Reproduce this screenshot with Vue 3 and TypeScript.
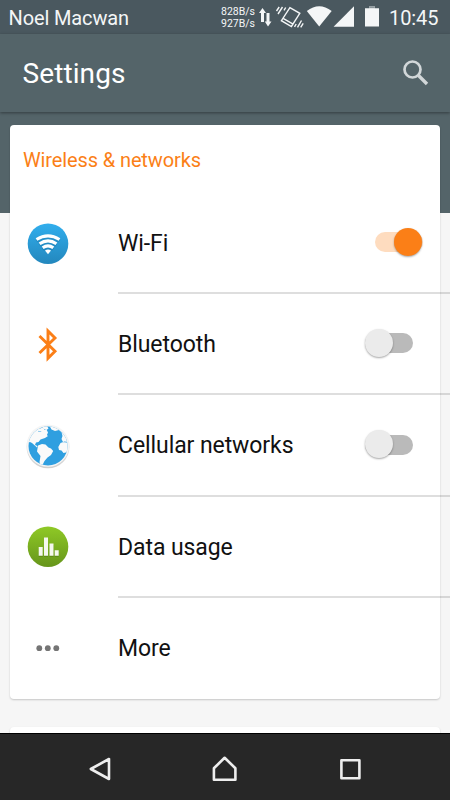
<script setup lang="ts">
import { ref } from 'vue'

type IconName = 'wifi' | 'bluetooth' | 'globe' | 'data' | 'more'

interface SettingRow {
  icon: IconName
  label: string
  toggle?: boolean
}

const rows = ref<SettingRow[]>([
  { icon: 'wifi', label: 'Wi-Fi', toggle: true },
  { icon: 'bluetooth', label: 'Bluetooth', toggle: false },
  { icon: 'globe', label: 'Cellular networks', toggle: false },
  { icon: 'data', label: 'Data usage' },
  { icon: 'more', label: 'More' },
])

function flip(row: SettingRow) {
  if (row.toggle !== undefined) row.toggle = !row.toggle
}
</script>

<template>
  <div class="screen">
    <header class="status">
      <span class="carrier">Noel Macwan</span>
      <div class="speed"><span>828B/s</span><span>927B/s</span></div>
      <svg class="status-icons" width="126" height="34" viewBox="0 0 126 34">
        <g fill="#f4f6f7">
          <path d="M5.500 8 9 13H7v9H4v-9H2zM11 26.500 7.800 21.500H9.500v-8.500h3v8.500h2z" />
          <path d="M49.800 11Q62.200 1.500 74.700 11L62.200 26.500z" />
          <path d="M97 6.300V26.700H76.600z" />
          <path d="M108 8.300h4.200V6.200h5.600v2.100h4.200v18.200H108z" />
          <path d="M112.200 6.200h5.600v2h-5.600z" fill="#8b959a" />
        </g>
        <g fill="none" stroke="#f4f6f7" stroke-width="1.400">
          <path d="m32.900 7.700 9.900 5.600-8.400 13.200-10-5.800zM26.100 18.400l10 5.700" />
          <path d="m22.200 7-2.700 4M25.500 7l-4.500 7M28.700 7.500l-1.700 2.800M37.500 26.800l1.700-2.800M40.500 27.300l4-6.800M43.700 27.300l2.500-4" />
        </g>
      </svg>
      <time class="clock">10:45</time>
    </header>

    <div class="appbar">
      <h1>Settings</h1>
      <svg class="search" width="28" height="28" viewBox="0 0 28 28" fill="none" stroke="#d2d7d9">
        <circle cx="10.500" cy="10.500" r="8" stroke-width="2.700" />
        <path d="m16.500 16.500 8.500 8.500" stroke-width="3.400" />
      </svg>
    </div>

    <main class="content">
      <section class="card">
        <h2>Wireless &amp; networks</h2>
        <div v-for="row in rows" :key="row.label" class="row" @click="flip(row)">
          <svg class="icon" width="46" height="46" viewBox="0 0 46 46">
            <defs>
              <linearGradient id="blue" x1="0" y1="0" x2="0" y2="1">
                <stop offset="0" stop-color="#31aeed" /><stop offset="1" stop-color="#2387bd" />
              </linearGradient>
              <linearGradient id="green" x1="0" y1="0" x2="0" y2="1">
                <stop offset="0" stop-color="#8fc926" /><stop offset="1" stop-color="#66951b" />
              </linearGradient>
              <linearGradient id="rim" x1="0" y1="0" x2="0" y2="1">
                <stop offset="0" stop-color="#f5f5f5" /><stop offset="1" stop-color="#cfcfcf" />
              </linearGradient>
              <clipPath id="disc"><circle cx="23" cy="23" r="19.500" /></clipPath>
            </defs>
            <template v-if="row.icon === 'wifi'">
              <circle cx="23" cy="22.700" r="20.300" fill="url(#blue)" />
              <g fill="none" stroke="#17699b" stroke-opacity=".3" stroke-width="3.200" transform="translate(0 1.500)">
                <path d="M11.500 18.700Q23 11.500 34.500 18.700M14.600 22.900Q23 17 31.400 22.900M17.700 27Q23 23 28.300 27" />
              </g>
              <g fill="none" stroke="#fff" stroke-width="3.100">
                <path d="M11.500 18.500Q23 11.300 34.500 18.500M14.600 22.700Q23 17 31.400 22.700M17.700 26.800Q23 23 28.300 26.800" />
              </g>
              <path d="M20 29.500Q23 27.700 26 29.500L23 33.300z" fill="#fff" />
            </template>
            <path
              v-else-if="row.icon === 'bluetooth'"
              d="m14.500 14 15.500 15.200-7 7V9l7 7L14.500 31"
              fill="none" stroke="#fb7f17" stroke-width="2.900"
            />
            <template v-else-if="row.icon === 'globe'">
              <circle cx="23" cy="23.800" r="21.500" fill="url(#rim)" />
              <circle cx="23" cy="22.600" r="21.200" fill="#f5f5f5" />
              <circle cx="23" cy="23" r="19.500" fill="#2f9fe0" />
              <g clip-path="url(#disc)" fill="#fafafa">
                <path d="M0 0h20l-5 5-2 3.500 4 .5 3 1.500 3 2.500-3 2-4.500 1.500-2 2.500-2.500.5-1 2.500 2.500 1-.5 1.500L7 20l-2-1-3 1z" />
                <path d="m13.500 6 4.500-1.500 1.500 2.500 2-.5 1.500 3-1.500 3.500-3.500-2-2-2.500-3-.5z" />
                <path d="m17 3.500 5-.5 1.500 2.500-2 1.500-3-1z" />
                <path d="m13 22.500 4-1.500 3.500.5 3 3 2.500 1 2.200 2.500-2.200 4-3.500 2.500-3 3.500L16 45l-1.500-6 1-6-3.500-4.500z" />
                <path d="m24 2 2.500 4.500 3.500 1.500 4-1 2.500 2 1 4-1 3 1.500 3 6 1V0zM33.300 24l2.200-4 4-1.500 4 .5v10l-5 1-2-2.500-2.500-.5z" />
              </g>
            </template>
            <template v-else-if="row.icon === 'data'">
              <circle cx="23" cy="22.700" r="20.300" fill="url(#green)" />
              <path d="M13.700 24.500h4v8.500h-4zM19 15h4v18h-4zM24.500 21h4v12h-4zM29.700 27.500h4V33h-4z" fill="#476e10" opacity=".4" />
              <path d="M13.700 23h4v8.800h-4zM19 13.500h4v18.300h-4zM24.500 19.500h4v12.300h-4zM29.700 26.200h4v5.600h-4z" fill="#f5f8ef" />
            </template>
            <g v-else fill="#757575">
              <circle cx="14.300" cy="23.200" r="2.900" /><circle cx="22.800" cy="23.200" r="2.900" /><circle cx="31.300" cy="23.200" r="2.900" />
            </g>
          </svg>
          <div class="label">{{ row.label }}</div>
          <span v-if="row.toggle !== undefined" class="switch" :class="{ on: row.toggle }">
            <span class="knob" />
          </span>
        </div>
      </section>
      <section class="card next" />
    </main>

    <nav class="navbar">
      <svg width="28" height="28" viewBox="0 0 28 28"><path d="M4.800 14 23 4v20z" /></svg>
      <svg width="28" height="28" viewBox="0 0 28 28"><path d="M2.900 24.800V13.200L13.600 2.800l10.800 10.400v11.600z" /></svg>
      <svg width="28" height="28" viewBox="0 0 28 28"><path d="M5.400 5.200h18v18h-18z" /></svg>
    </nav>
  </div>
</template>

<style>
body { margin: 0; overflow: hidden; }
</style>

<style scoped>
.screen {
  width: 450px;
  height: 800px;
  overflow: hidden;
  display: flex;
  flex-direction: column;
  font-family: Roboto, "Noto Sans", sans-serif;
  background: #f6f6f6;
}
.status {
  height: 34px;
  flex: none;
  display: flex;
  align-items: center;
  padding-left: 8.5px;
  background: #4a585f;
  color: #f4f6f7;
}
.carrier { width: 212.5px; padding-top: 1px; font-size: 20px; letter-spacing: -.12px; }
.speed {
  width: 36px;
  display: flex;
  flex-direction: column;
  padding-top: 1px;
  font-size: 10.5px;
  line-height: 12px;
}
.status-icons { flex: none; }
.clock { margin-left: 6px; padding-top: 1px; font-size: 20px; letter-spacing: -.1px; white-space: nowrap; }
.appbar {
  height: 78px;
  flex: none;
  display: flex;
  align-items: center;
  justify-content: space-between;
  padding: 0 20px 0 22.5px;
  background: #546469;
  box-shadow: 0 1px 3px rgba(0, 0, 0, .4);
  z-index: 1;
}
h1 { margin: 0; font-size: 28px; font-weight: 400; letter-spacing: .1px; color: #fff; }
.content {
  flex: 1;
  min-height: 0;
  overflow: hidden;
  padding: 13px 10px 0;
  background: linear-gradient(#546469 101px, #f6f6f6 101px);
}
.card {
  height: 574px;
  border-radius: 4px;
  background: #fff;
  box-shadow: 0 1px 2px rgba(0, 0, 0, .2);
}
.card.next { margin-top: 28px; }
h2 {
  box-sizing: border-box;
  height: 68px;
  margin: 0;
  padding: 23px 13px 0;
  font-size: 20px;
  line-height: 24px;
  font-weight: 400;
  letter-spacing: -.12px;
  color: #fb7f17;
}
.row {
  height: 101.2px;
  display: grid;
  grid-template-columns: 108px 1fr;
  align-items: center;
  position: relative;
}
.icon { margin-left: 15px; }
.label {
  height: 100%;
  box-sizing: border-box;
  display: flex;
  align-items: center;
  margin-right: -10px;
  padding-top: 2px;
  border-bottom: 2px solid rgba(0, 0, 0, .13);
  font-size: 23px;
  letter-spacing: -.08px;
  color: #111;
}
.row:last-child .label { padding-top: 0; border-bottom: 0; }
.switch {
  position: absolute;
  left: 355px;
  top: 39.2px;
  width: 47.5px;
  height: 20px;
  border-radius: 10px;
  background: #bababa;
}
.knob {
  position: absolute;
  left: 0;
  top: -4.2px;
  width: 28px;
  height: 28px;
  border-radius: 50%;
  background: #ebebeb;
  box-shadow: 0 1px 2px rgba(0, 0, 0, .35);
}
.switch.on { left: 365px; background: #fedcbf; }
.switch.on .knob { left: 19px; background: #fb7f17; }
.navbar {
  height: 67px;
  flex: none;
  box-sizing: border-box;
  border-top: 1px solid #000;
  display: flex;
  align-items: center;
  justify-content: space-between;
  padding: 4px 86px 0 86px;
  background: #272727;
}
.navbar path { fill: none; stroke: #eee; stroke-width: 2.6; stroke-linejoin: round; }
</style>
